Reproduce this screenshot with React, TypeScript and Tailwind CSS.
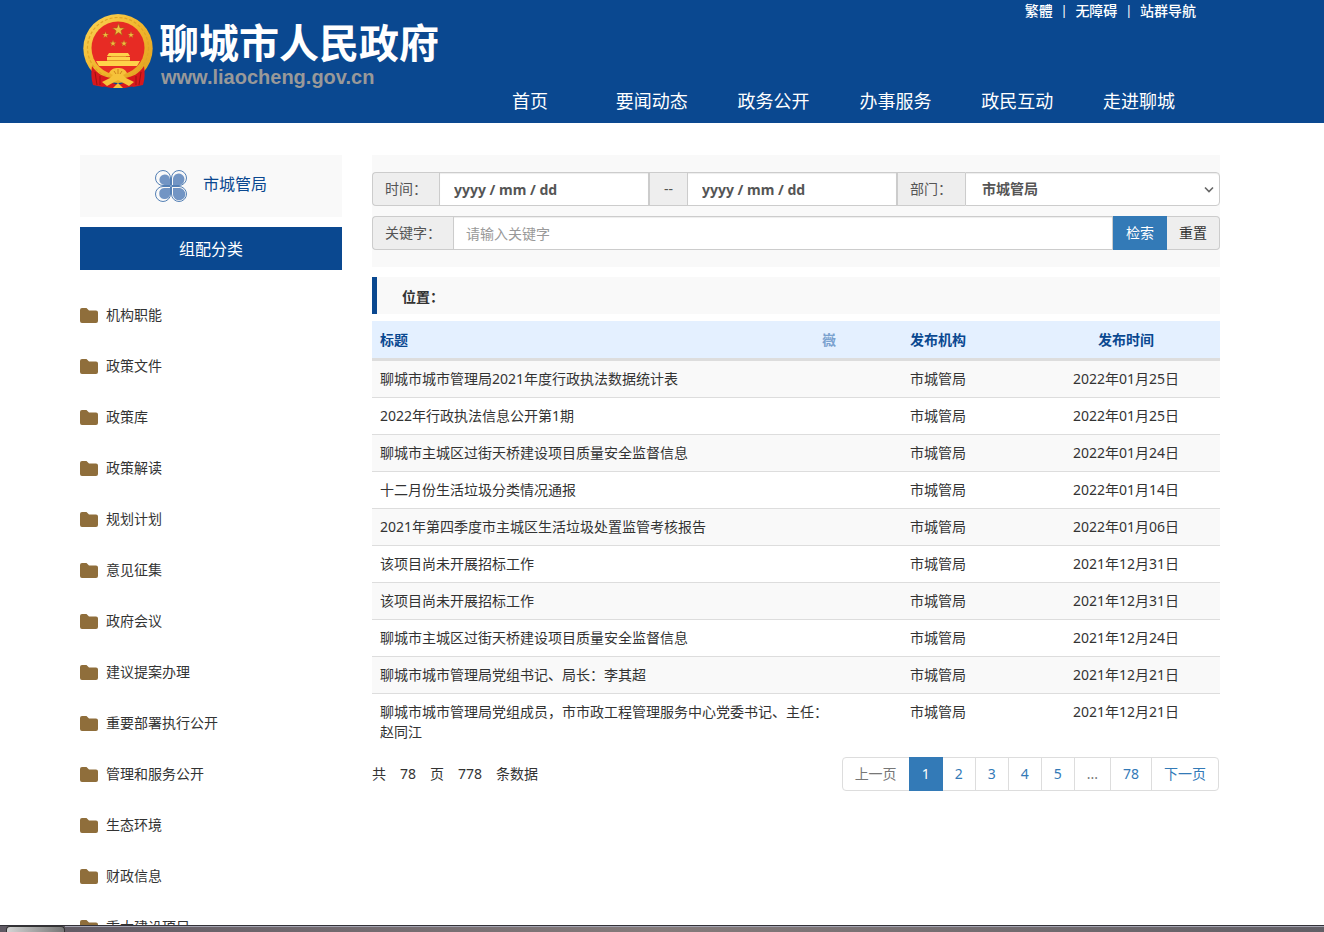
import React from "react";

const navItems = ["首页", "要闻动态", "政务公开", "办事服务", "政民互动", "走进聊城"];

const categories = [
  "机构职能",
  "政策文件",
  "政策库",
  "政策解读",
  "规划计划",
  "意见征集",
  "政府会议",
  "建议提案办理",
  "重要部署执行公开",
  "管理和服务公开",
  "生态环境",
  "财政信息",
  "重大建设项目",
];

const rows = [
  ["聊城市城市管理局2021年度行政执法数据统计表", "2022年01月25日"],
  ["2022年行政执法信息公开第1期", "2022年01月25日"],
  ["聊城市主城区过街天桥建设项目质量安全监督信息", "2022年01月24日"],
  ["十二月份生活垃圾分类情况通报", "2022年01月14日"],
  ["2021年第四季度市主城区生活垃圾处置监管考核报告", "2022年01月06日"],
  ["该项目尚未开展招标工作", "2021年12月31日"],
  ["该项目尚未开展招标工作", "2021年12月31日"],
  ["聊城市主城区过街天桥建设项目质量安全监督信息", "2021年12月24日"],
  ["聊城市城市管理局党组书记、局长：李其超", "2021年12月21日"],
  ["聊城市城市管理局党组成员，市市政工程管理服务中心党委书记、主任：赵同江", "2021年12月21日"],
];

const STAR = "M0-10 2.4-3.2 9.5-3.1 3.8 1.2 5.9 8.1 0 4-5.9 8.1-3.8 1.2-9.5-3.1-2.4-3.2Z";

function Emblem() {
  return (
    <svg className="h-[76px] w-[72px] shrink-0" viewBox="0 0 72 76" aria-hidden="true">
      <defs>
        <linearGradient id="gold" x1="0" y1="0" x2="1" y2="1">
          <stop offset="0" stopColor="#fbd75a" />
          <stop offset="0.5" stopColor="#f1b62c" />
          <stop offset="1" stopColor="#e0a020" />
        </linearGradient>
      </defs>
      <ellipse cx="35" cy="35.500" rx="34.700" ry="34.500" fill="url(#gold)" />
      <ellipse cx="35" cy="35" rx="30.500" ry="30.500" fill="none" stroke="#e0a526" strokeWidth="1.200" strokeDasharray="3 2" />
      <circle cx="35" cy="35" r="26.500" fill="#e72b24" />
      <g fill="#f0c040" stroke="#a85c14" strokeWidth="1">
        <path transform="translate(35.500 17) scale(.64)" d={STAR} />
        <path transform="translate(22.500 22) scale(.34)" d={STAR} />
        <path transform="translate(48 22) scale(.34)" d={STAR} />
        <path transform="translate(30 30.500) scale(.34)" d={STAR} />
        <path transform="translate(41 30.500) scale(.34)" d={STAR} />
      </g>
      <path d="M26 40h19l2 3H24ZM28 43h15v2H28ZM24 44h23v4H24ZM13 48h44l-3 5H16Z" fill="#ffd24a" />
      <path d="M25 43.500h21M24 47.500h23" stroke="#d77b1c" strokeWidth="0.700" />
      <path d="M17 53h36c-4 5-10 8-18 8s-14-3-18-8Z" fill="#e72b24" />
      <path d="M9 53c5 8 12 11 19 12l-8 9-10-2c-2-6-2-13-1-19ZM61 53c-5 8-12 11-19 12l8 9 10-2c2-6 2-13 1-19Z" fill="#d8181c" />
      <path d="M21 67l14 5 14-5 2 6-9 2H28l-9-2Z" fill="#d8181c" />
      <path d="M12 59l2 13M17 63v9M58 59l-2 13M53 63v9" stroke="#9f1010" strokeWidth="1" />
      <path d="M26 60c2-4 5-5 9-5s7 1 9 5l-4 2 3 3 8 4-5 4-11-6-11 6-5-4 8-4 3-3Z" fill="#f6c23a" />
      <path d="M31 58l2 3M35 56v5M39 58l-2 3" stroke="#c97a17" strokeWidth="0.900" />
      <path d="M30 75l5-5 5 5Z" fill="#f6c23a" />
    </svg>
  );
}

function Petal({ transform }: { transform: string }) {
  return (
    <g transform={transform}>
      <path d="M15.500 15.500H8A7.500 7.500 0 1 1 15.500 8Z" fill="#f9f9f9" stroke="#5480b5" strokeWidth="1" />
    </g>
  );
}

function CloverIcon() {
  return (
    <svg className="h-8 w-8" viewBox="0 0 32 32" aria-hidden="true">
      <Petal transform="" />
      <Petal transform="translate(32 0) scale(-1 1)" />
      <Petal transform="translate(0 32) scale(1 -1)" />
      <Petal transform="translate(32 32) scale(-1 -1)" />
      <g fill="#7295c4">
        <path d="M15 15H9.500A5.300 5.300 0 1 1 15 9.500Z" />
        <path d="M18 15V10.500A5.800 5.800 0 1 1 25 15Z" />
        <path d="M15 18V25A5.500 5.500 0 1 1 9 18Z" />
        <path d="M18 18H25A6.200 6.200 0 1 1 18 25Z" />
      </g>
    </svg>
  );
}

function FolderIcon() {
  return (
    <svg className="h-[15px] w-[18px] shrink-0" viewBox="0 0 18 15" aria-hidden="true">
      <path d="M2 0H6.500L9 2.500H16A2 2 0 0 1 18 4.500V13A2 2 0 0 1 16 15H2A2 2 0 0 1 0 13V2A2 2 0 0 1 2 0Z" fill="#8f6e3b" />
    </svg>
  );
}

const addon = "flex items-center border-[#ccc] bg-[#eee] px-3 text-[#555]";
const field =
  "h-full min-w-0 border border-[#ccc] bg-white text-[#555] shadow-[inset_0_1px_1px_rgba(0,0,0,0.075)] outline-none";
const pageLink = "-ml-px flex h-[34px] items-center border border-[#ddd] px-3";

export default function App() {
  return (
    <div className="flex h-screen flex-col overflow-hidden bg-white font-['Noto_Sans','Noto_Sans_CJK_SC',sans-serif] text-sm leading-5 text-[#333]">
      <header className="shrink-0 bg-[#0a4890] pr-6 text-white">
        <div className="mx-auto flex h-[123px] w-full max-w-[1140px] justify-between">
          <a href="#" className="flex items-start gap-1 pt-[13px] pl-[3px]">
            <Emblem />
            <span className="flex flex-col">
              <span className="text-[40px] leading-[60px] font-bold whitespace-nowrap">聊城市人民政府</span>
              <span className="-mt-2 pl-0.5 font-['Liberation_Sans',sans-serif] text-xl leading-6 font-bold text-[#999]">
                www.liaocheng.gov.cn
              </span>
            </span>
          </a>
          <div className="flex w-[731px] shrink-0 flex-col justify-between pr-5 pb-1.5 box-content">
            <div className="flex justify-end gap-2 pt-px pr-1 font-medium">
              <a href="#">繁體</a>
              <span className="text-xs leading-5">|</span>
              <a href="#">无障碍</a>
              <span className="text-xs leading-5">|</span>
              <a href="#">站群导航</a>
            </div>
            <nav className="grid grid-cols-6 text-center text-lg leading-8">
              {navItems.map((n) => (
                <a key={n} href="#">
                  {n}
                </a>
              ))}
            </nav>
          </div>
        </div>
      </header>

      <div className="min-h-0 flex-1 overflow-hidden pr-6">
        <div className="mx-auto flex w-full max-w-[1140px] gap-[30px] pt-8">
          <aside className="w-[262px] shrink-0">
            <div className="flex h-[62px] items-center justify-center gap-4 bg-[#f9f9f9] text-base text-[#0a4890]">
              <CloverIcon />
              <span className="pb-1">市城管局</span>
            </div>
            <h2 className="mt-2.5 flex h-[43px] items-center justify-center bg-[#0a4890] text-base text-white">组配分类</h2>
            <ul className="mt-[19px]">
              {categories.map((c) => (
                <li key={c}>
                  <a href="#" className="flex h-[51px] items-center gap-2">
                    <span className="pt-0.5">
                      <FolderIcon />
                    </span>
                    <span>{c}</span>
                  </a>
                </li>
              ))}
            </ul>
          </aside>

          <main className="min-w-0 flex-1">
            <form className="flex flex-col gap-2.5 bg-[#f9f9f9] py-[17px]" onSubmit={(e) => e.preventDefault()}>
              <div className="flex h-[34px]">
                <label htmlFor="from" className={`${addon} w-[67px] rounded-l border-y border-l`}>
                  时间：
                </label>
                <input id="from" placeholder="yyyy / mm / dd" className={`${field} flex-1 px-3.5 font-bold placeholder:text-[#555]`} />
                <label htmlFor="to" className={`${addon} w-[38px] justify-center border-y border-l`}>
                  --
                </label>
                <input id="to" placeholder="yyyy / mm / dd" className={`${field} flex-1 px-3.5 font-bold placeholder:text-[#555]`} />
                <label htmlFor="dept" className={`${addon} w-[68px] border-y border-l`}>
                  部门：
                </label>
                <div className="relative w-[255px]">
                  <select id="dept" className={`${field} w-full appearance-none rounded-r px-4 font-bold`}>
                    <option>市城管局</option>
                  </select>
                  <svg
                    className="pointer-events-none absolute top-3.5 right-1.5 h-[7px] w-[10px]"
                    viewBox="0 0 10 7"
                    fill="none"
                    stroke="#666"
                    strokeWidth="1.600"
                    aria-hidden="true"
                  >
                    <path d="M1 1.500 5 5.500 9 1.500" />
                  </svg>
                </div>
              </div>
              <div className="flex h-[34px]">
                <label htmlFor="keyword" className={`${addon} w-[81px] rounded-l border-y border-l`}>
                  关键字：
                </label>
                <input id="keyword" placeholder="请输入关键字" className={`${field} flex-1 px-3 placeholder:text-[#999]`} />
                <button type="submit" className="w-[54px] bg-[#337ab7] text-white">
                  检索
                </button>
                <button type="reset" className="w-[53px] rounded-r border-y border-r border-[#ccc] bg-[#eee]">
                  重置
                </button>
              </div>
            </form>

            <div className="mt-2.5 flex h-[37px] items-center border-l-[5px] border-[#0a4890] bg-[#f9f9f9] pt-0.5 pl-[25px] font-bold">
              位置：
            </div>

            <table className="mt-[7px] w-full table-fixed border-collapse">
              <colgroup>
                <col />
                <col className="w-[188px]" />
                <col className="w-[188px]" />
              </colgroup>
              <thead>
                <tr className="border-b-3 border-[#ddd] bg-[#e4f0ff] text-[#0a4890]">
                  <th className="px-2 pt-[9px] pb-2 text-left font-bold">
                    <span className="flex justify-between">
                      标题
                      <span className="text-[#7ba2cf]">嶶</span>
                    </span>
                  </th>
                  <th className="px-2 pt-[9px] pb-2 font-bold">发布机构</th>
                  <th className="px-2 pt-[9px] pb-2 font-bold">发布时间</th>
                </tr>
              </thead>
              <tbody>
                {rows.map(([title, date], i) => (
                  <tr key={i} className="border-t border-[#ddd] align-top odd:bg-[#f9f9f9]">
                    <td className="p-2">
                      <a href="#">{title}</a>
                    </td>
                    <td className="p-2 text-center">市城管局</td>
                    <td className="p-2 text-center">{date}</td>
                  </tr>
                ))}
              </tbody>
            </table>

            <div className="mt-[7px] flex items-center justify-between pr-px">
              <p className="flex gap-3.5">
                <span>共</span>
                <span>78</span>
                <span>页</span>
                <span>778</span>
                <span>条数据</span>
              </p>
              <nav className="flex text-[#337ab7]" aria-label="分页">
                <a href="#" className={`${pageLink} rounded-l text-[#777]`}>
                  上一页
                </a>
                <a href="#" className="z-10 -ml-px flex h-[34px] items-center bg-[#337ab7] px-[13px] text-white">
                  1
                </a>
                {["2", "3", "4", "5"].map((p) => (
                  <a key={p} href="#" className={pageLink}>
                    {p}
                  </a>
                ))}
                <span className={`${pageLink} text-[#777]`}>...</span>
                <a href="#" className={pageLink}>
                  78
                </a>
                <a href="#" className={`${pageLink} rounded-r`}>
                  下一页
                </a>
              </nav>
            </div>
          </main>
        </div>
      </div>

      <div className="flex h-[7px] shrink-0 border-t border-[#333238] bg-linear-to-r from-[#5f5963] via-[#857b7b] to-[#625f66]">
        <div className="ml-1.5 w-[59px] rounded-t-sm border-x border-t border-[#333] bg-linear-to-r from-[#d5d5d5] to-[#777]" />
        <div className="flex-1 border-t border-[#a5a5b2]" />
      </div>
    </div>
  );
}
